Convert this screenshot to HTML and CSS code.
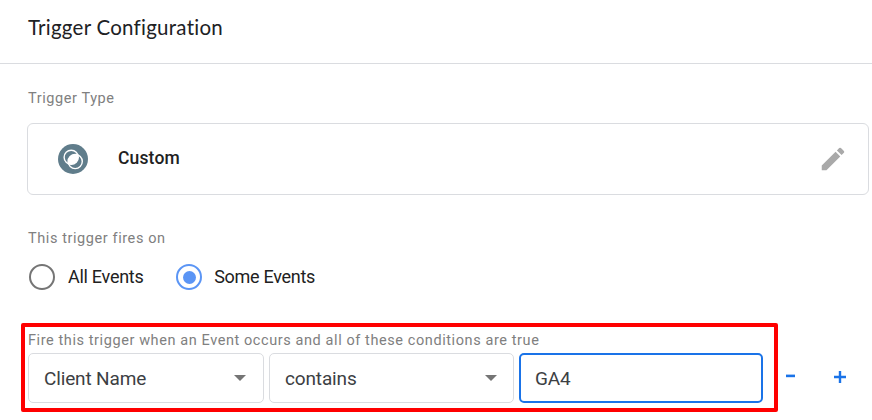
FILE: index.html
```
<!DOCTYPE html>
<html lang="en">
<head>
<meta charset="utf-8">
<title>Trigger Configuration</title>
<link rel="stylesheet" href="styles.css">
</head>
<body>
<header class="header"><h1 class="title">Trigger Configuration</h1></header>
<main>
  <div class="label type-label">Trigger Type</div>
  <section class="card">
    <svg class="type-icon" width="30" height="30" viewBox="0 0 30 30">
      <circle cx="15" cy="15" r="15" fill="#607d8b"/>
      <clipPath id="lens"><circle cx="13.2" cy="13.3" r="7.1"/></clipPath>
      <circle cx="17.2" cy="17.5" r="7.1" fill="#fff" clip-path="url(#lens)"/>
      <circle cx="13.2" cy="13.3" r="7.1" fill="none" stroke="#fff" stroke-width="1.4"/>
      <circle cx="17.2" cy="17.5" r="7.1" fill="none" stroke="#fff" stroke-width="1.4"/>
    </svg>
    <span class="type-name">Custom</span>
    <svg class="pencil" width="30" height="30" viewBox="0 0 24 24" fill="#a9a9a9"><path d="M3 17.25V21h3.75L17.81 9.94l-3.75-3.75L3 17.25zM20.71 7.04a1 1 0 0 0 0-1.41l-2.34-2.34a1 1 0 0 0-1.41 0l-1.83 1.83 3.75 3.75 1.83-1.83z"/></svg>
  </section>
  <div class="label fires-label">This trigger fires on</div>
  <div class="radios">
    <div class="radio"><span class="ring"></span><span>All Events</span></div>
    <div class="radio selected"><span class="ring"></span><span>Some Events</span></div>
  </div>
  <div class="conditions">
    <div class="frame">
      <div class="label">Fire this trigger when an Event occurs and all of these conditions are true</div>
      <div class="fields">
        <div class="field"><span>Client Name</span><span class="arrow"></span></div>
        <div class="field"><span>contains</span><span class="arrow"></span></div>
        <div class="field focused"><span>GA4</span></div>
      </div>
    </div>
    <svg class="minus" width="9" height="12" viewBox="0 0 9 12"><path d="M0 2.6h9v2.6H0z" fill="#1a73e8"/></svg>
    <svg class="plus" width="12" height="12" viewBox="0 0 12 12"><path d="M0 4.8h4.8V0h2.4v4.8H12v2.4H7.2V12H4.8V7.2H0z" fill="#1a73e8"/></svg>
  </div>
</main>
</body>
</html>
```
FILE: styles.css
```
* { box-sizing: border-box; }
body { margin: 0; background: #fff; color: #212121; font-family: Roboto, "Liberation Sans", sans-serif; overflow: hidden; }
.header { height: 64px; padding: 15px 28px 0; border-bottom: 1px solid #dadce0; }
.title { margin: 0; font: 400 20.5px/24px Lato, sans-serif; letter-spacing: .25px; color: #202124; }
.label { font-size: 14.5px; line-height: 18px; letter-spacing: .585px; color: #808080; white-space: nowrap; }
.type-label { margin: 26px 0 0 28px; }
.card { display: flex; align-items: center; width: 842px; height: 72px; margin: 15px 0 0 27px; padding: 0 20px 0 30px; border: 1px solid #dadce0; border-radius: 6px; }
.type-name { margin: 0 auto 2px 30px; font-size: 17.5px; line-height: 22px; font-weight: 500; letter-spacing: .15px; }
.fires-label { margin: 35px 0 0 28px; }
.radios { display: flex; margin: 16px 0 0 29px; gap: 32.7px; font-size: 18px; line-height: 26px; letter-spacing: -.28px; }
.radio { display: flex; align-items: center; gap: 13px; white-space: nowrap; }
.selected { gap: 12px; }
.ring { display: grid; place-items: center; width: 26px; height: 26px; border: 2px solid #757575; border-radius: 50%; }
.selected .ring { border-color: #5b95f5; }
.selected .ring::after { content: ""; width: 13px; height: 13px; border-radius: 50%; background: #5b95f5; }
.conditions { display: flex; margin: 33px 0 0 21px; }
.frame { width: 757px; height: 89px; border: 4px solid #f00; border-radius: 2px; padding: 5px 0 0 3px; }
.fields { display: flex; gap: 5px; margin-top: 3px; }
.field { display: flex; align-items: center; justify-content: space-between; width: 245px; height: 50px; padding: 0 16px 0 15px; border: 1px solid #dadce0; border-radius: 5px; font-size: 19px; letter-spacing: -.15px; color: #3c4043; }
.field:first-child { width: 236px; padding-right: 17px; }
.focused { width: 244px; border: 2px solid #1a73e8; padding-left: 14px; }
.arrow { border: 6.5px solid transparent; border-top-color: #757575; border-bottom: 0; }
.minus { margin: 49px 0 0 8px; }
.plus { margin: 48px 0 0 39px; }
```
